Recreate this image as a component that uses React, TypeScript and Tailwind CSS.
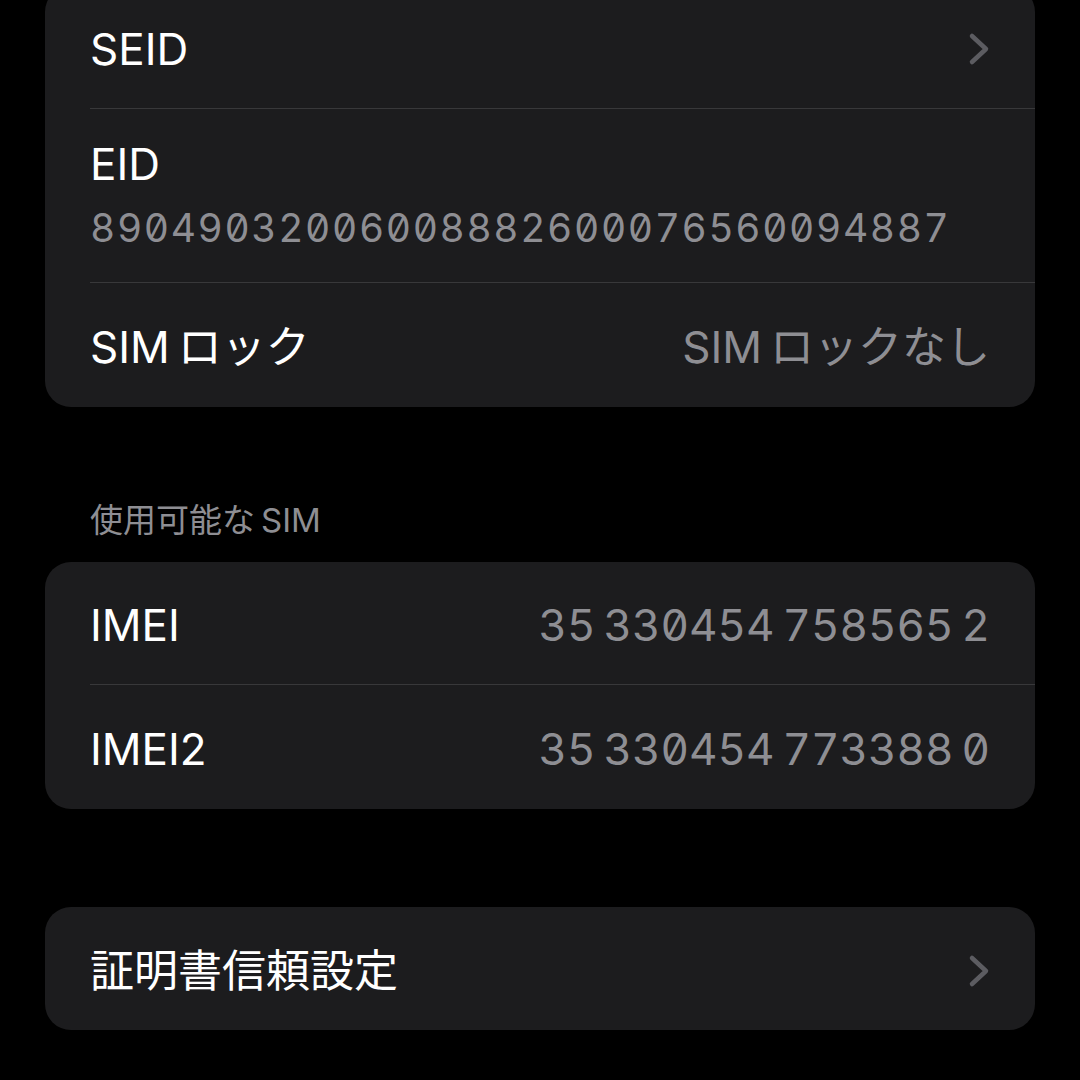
const font = { fontFamily: '"Inter", "Noto Sans CJK JP", sans-serif' };

function Chevron() {
  return (
    <svg width="22" height="34" viewBox="0 0 22 34" className="shrink-0">
      <polyline
        points="4,4 18,17 4,30"
        fill="none"
        stroke="#5c5c61"
        strokeWidth="4.5"
        strokeLinecap="round"
        strokeLinejoin="round"
      />
    </svg>
  );
}

function Row({ label, value, chevron, last, mono, h = "h-[123px]" }: { label: string; value?: string; chevron?: boolean; last?: boolean; mono?: boolean; h?: string }) {
  return (
    <div className="pl-[45px]">
      <div className={`flex items-center justify-between pt-[4px] pr-[45px] ${h} ${last ? "" : "border-b border-[#38383a]"}`}>
        <span className="text-white text-[44px] leading-none">{label}</span>
        {value && (
          <span className={`text-[#8e8e93] text-[44px] leading-none ${mono ? "tabular-nums slashed-zero [word-spacing:-4px]" : ""}`}>
            {value}
          </span>
        )}
        {chevron && <Chevron />}
      </div>
    </div>
  );
}

export default function App() {
  return (
    <div className="min-h-[1080px] w-[1080px] bg-black overflow-hidden" style={font}>
      <div className="px-[45px]">
        {/* カード1 */}
        <div className="mt-[-14px] bg-[#1c1c1e] rounded-[26px] overflow-hidden">
          <Row label="SEID" chevron />
          <div className="pl-[45px]">
            <div className="border-b border-[#38383a] h-[174px] flex flex-col pt-[33px]">
              <span className="text-white text-[44px] leading-none">EID</span>
              <span className="mt-[22px] text-[#8e8e93] text-[39px] leading-none tracking-[1.6px] tabular-nums slashed-zero">
                89049032006008882600076560094887
              </span>
            </div>
          </div>
          <Row label={"SIM\u2009ロック"} value={"SIM\u2009ロックなし"} last h="h-[124px]" />
        </div>

        <div className="pl-[45px] pt-[97px] pb-[25px] text-[#8e8e93] text-[33px] leading-none">{"使用可能な\u2009SIM"}</div>

        {/* カード2 */}
        <div className="bg-[#1c1c1e] rounded-[26px] overflow-hidden">
          <Row label="IMEI" value="35 330454 758565 2" mono />
          <Row label="IMEI2" value="35 330454 773388 0" mono last h="h-[124px]" />
        </div>

        {/* カード3 */}
        <div className="mt-[98px] bg-[#1c1c1e] rounded-[26px] overflow-hidden">
          <Row label="証明書信頼設定" chevron last />
        </div>
      </div>
    </div>
  );
}
